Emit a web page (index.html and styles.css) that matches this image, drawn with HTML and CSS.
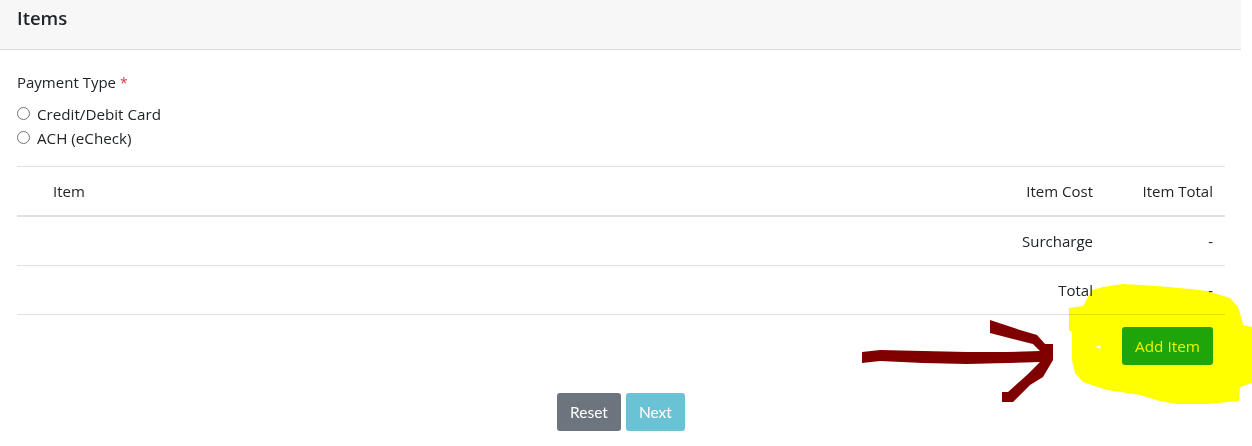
FILE: index.html
```html
<!DOCTYPE html>
<html lang="en">
<head>
  <meta charset="UTF-8">
  <title>Items</title>
  <link rel="stylesheet" href="styles.css">
</head>
<body>

<svg class="scribble" width="1252" height="446" viewBox="0 0 1252 446">
  <path class="blob" d="M1092 290 L1103 287 L1123 284 L1157 286 L1190 289 L1207 291 L1230 298 L1238 307 L1242 320 L1243 325 L1252 327 L1252 383 L1240 387 L1239 401 L1207 404 L1177 404 L1160 401 L1140 395 L1107 390 L1083 382 L1075 373 L1072 360 L1072 332 L1069 330 L1069 308 L1083 306 Z"/>
  <path class="speck" d="M1095 347 L1100 345 L1101 349 Z"/>
  <path class="arrow" d="M862 352 L880 350 L923 351 L967 352 L1007 352 L1040 351 L1033 344 L1013 339 L990 333 L990 320 L1020 330 L1037 335 L1045 344 L1053 344 L1053 360 L1043 377 L1030 385 L1013 402 L1002 402 L1002 392 L1008 392 L1027 375 L1040 362 L1007 363 L967 364 L923 363 L880 361 L862 363 Z"/>
</svg>

<div class="card">
  <div class="card-header">Items</div>
  <div class="card-body">
    <p class="field-label">Payment Type <span class="required">*</span></p>
    <label class="radio"><input type="radio" name="payment"> Credit/Debit Card</label>
    <label class="radio"><input type="radio" name="payment"> ACH (eCheck)</label>

    <table class="items">
      <thead>
        <tr>
          <th class="item-name">Item</th>
          <th class="num">Item Cost</th>
          <th class="num">Item Total</th>
        </tr>
      </thead>
      <tbody>
        <tr>
          <td></td>
          <td class="num">Surcharge</td>
          <td class="num">-</td>
        </tr>
        <tr>
          <td></td>
          <td class="num">Total</td>
          <td class="num">-</td>
        </tr>
      </tbody>
    </table>

    <div class="add-row">
      <button class="btn btn-add">Add Item</button>
    </div>

    <div class="actions">
      <button class="btn btn-reset">Reset</button>
      <button class="btn btn-next">Next</button>
    </div>
  </div>
</div>

</body>
</html>
```

FILE: styles.css
```css
body {
  margin: 0;
  height: 446px;
  overflow: hidden;
  background: #fff;
  color: #212529;
  font-family: "Open Sans", "Noto Sans", sans-serif;
  font-size: 15px;
  position: relative;
}
.scribble {
  position: absolute;
  left: 0;
  top: 0;
}
.blob {
  fill: #ffff00;
}
.speck {
  fill: #fff;
}
.arrow {
  fill: #800000;
}
.card {
  position: relative;
  width: 1241px;
}
.card-header {
  height: 50px;
  box-sizing: border-box;
  padding: 5px 17px 0;
  background: #f7f7f7;
  border-bottom: 1px solid #dcdcdc;
  font-size: 18.5px;
  font-weight: 600;
  line-height: 25px;
}
.card-body {
  padding: 21px 16px 0 17px;
}
.field-label {
  margin: 0 0 8px;
  line-height: 22px;
}
.required {
  color: #dc3545;
  font-size: 14px;
}
.radio {
  display: flex;
  align-items: center;
  height: 24px;
  gap: 7px;
  font-size: 15.2px;
}
.radio input {
  width: 13px;
  height: 13px;
  margin: 0;
  position: relative;
  top: -1px;
}
.items {
  width: 100%;
  margin-top: 16px;
  border-collapse: collapse;
  mix-blend-mode: multiply;
}
.items th,
.items td {
  font-weight: 400;
  padding: 0 12px;
  height: 48px;
  border-top: 1px solid #dee2e6;
  text-align: left;
}
.items thead th {
  border-bottom: 2px solid #dee2e6;
}
.items tbody tr:last-child td {
  border-bottom: 1px solid #dee2e6;
}
.items .item-name {
  padding-left: 36px;
}
.items .num {
  text-align: right;
  width: 96px;
}
.btn {
  border: 1px solid transparent;
  border-radius: 3px;
  font-family: Lato, sans-serif;
  font-size: 15.5px;
  height: 38px;
  padding: 0 12px;
}
.add-row {
  display: flex;
  justify-content: flex-end;
  padding: 12px 12px 0 0;
}
.btn-add {
  width: 91px;
  background: #1fa50a;
  color: #e8f500;
  font-family: "Open Sans", sans-serif;
  font-size: 15.3px;
}
.actions {
  display: flex;
  justify-content: center;
  gap: 5px;
  margin-top: 28px;
}
.btn-reset {
  background: #6c757d;
  color: #fff;
}
.btn-next {
  background: #6ac3d5;
  color: #fff;
}
```
